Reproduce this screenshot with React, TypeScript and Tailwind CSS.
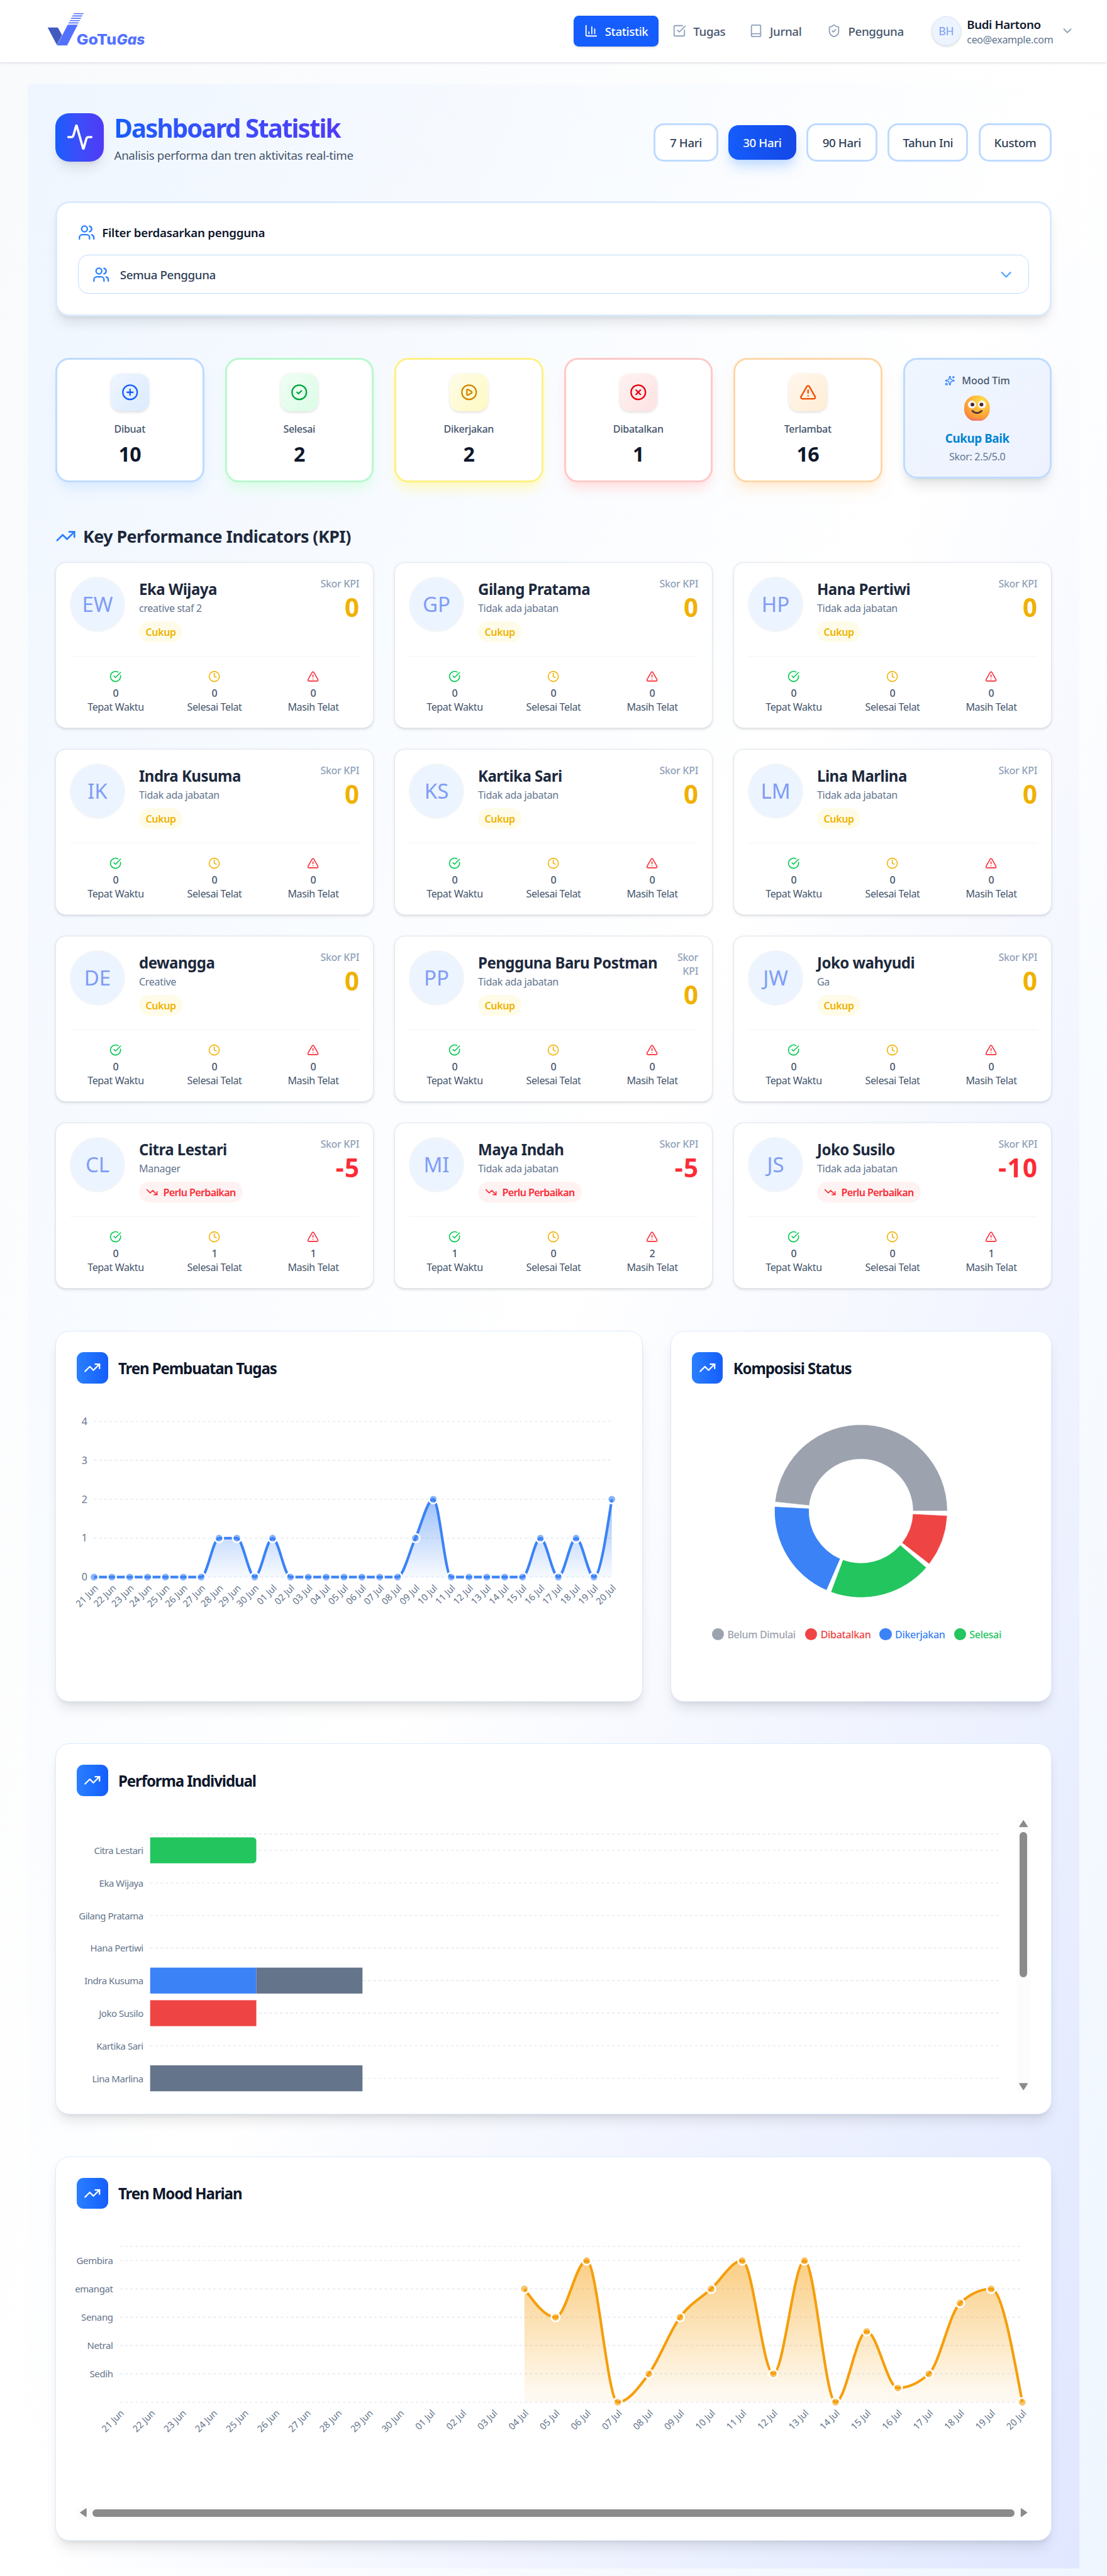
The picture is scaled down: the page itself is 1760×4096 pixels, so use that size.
import React from "react";
import {
  Activity, Book, ChartColumn, ChevronDown, CircleCheck, CircleCheckBig, CirclePlay, CirclePlus, CircleX, Clock,
  ShieldCheck, Sparkles, SquareCheckBig, TrendingDown, TrendingUp, TriangleAlert, Users,
} from "lucide-react";

const T12 = "text-[11.7px] leading-4 tracking-[-0.021em]";
const T14 = "text-[13.65px] leading-5 tracking-[-0.021em]";

/* ---------- header ---------- */

function Logo() {
  const stripes = [0, 1, 2, 3, 4];
  return (
    <svg viewBox="0 0 184 80" className="h-[53.33px] w-[122.67px]">
      <polygon points="6.3,37.8 24,37.8 31.2,51 22.3,68.3" fill="#4259bd" />
      <polygon points="41.2,33 58.5,33 40,69 22.3,69" fill="#5271ff" />
      {stripes.map((i) => {
        const y = 29 - i * 4;
        const x = 42.2 + i * 2.15;
        return <polygon key={i} points={`${x + 0.9},${y} ${x + 18},${y} ${x + 17.1},${y + 1.8} ${x},${y + 1.8}`} fill="#5271ff" />;
      })}
      <g fontFamily="Inter, sans-serif" fontWeight="800" fontSize="24.5" fill="#5271ff">
        <text x="56.5" y="67.3" textLength="69" lengthAdjust="spacingAndGlyphs">GoTu</text>
        <text x="126" y="67.3" textLength="49" lengthAdjust="spacingAndGlyphs" fontStyle="italic">Gas</text>
      </g>
    </svg>
  );
}

const NAV = [
  { label: "Statistik", icon: ChartColumn, cls: "w-[98.3px] bg-[#155dfc] text-white shadow-sm", ic: "text-white" },
  { label: "Tugas", icon: SquareCheckBig, cls: "w-[84.5px] text-[#45556c]", ic: "text-[#90a1b9]" },
  { label: "Jurnal", icon: Book, cls: "w-[86.5px] text-[#45556c]", ic: "text-[#90a1b9]" },
  { label: "Pengguna", icon: ShieldCheck, cls: "w-[110.8px] text-[#45556c]", ic: "text-[#90a1b9]" },
];

function Header() {
  return (
    <header className="flex h-[72.67px] items-center border-b border-[#e2e8f0] bg-white pr-[38px] pl-[50.67px] shadow-sm">
      <div className="-mt-[6px]"><Logo /></div>
      <nav className="ml-auto flex gap-1">
        {NAV.map(({ label, icon: Icon, cls, ic }) => (
          <a key={label} className={`flex h-9 items-center gap-2 rounded-md px-3 font-medium whitespace-nowrap ${T14} ${cls}`}>
            <Icon size={16} className={`shrink-0 ${ic}`} />
            <span>{label}</span>
          </a>
        ))}
      </nav>
      <div className="ml-[21.5px] flex items-center">
        <div className="flex h-[34px] w-[34px] items-center justify-center rounded-full border border-[#dbe5f3] bg-[#ebf4ff] text-[12.8px] tracking-[-0.02em] text-[#7f9cf5] shadow-sm">BH</div>
        <div className="ml-[7px] w-[108px] whitespace-nowrap">
          <div className={`font-semibold text-[#0f172b] ${T14}`}>Budi Hartono</div>
          <div className={`text-[#62748e] ${T12}`}>ceo@example.com</div>
        </div>
        <ChevronDown size={16} className="text-[#90a1b9]" />
      </div>
    </header>
  );
}

/* ---------- title and filter ---------- */

const RANGES = [
  { label: "7 Hari", w: "w-[74.3px]" },
  { label: "30 Hari", w: "w-[78.2px]", active: true },
  { label: "90 Hari", w: "w-[81.9px]" },
  { label: "Tahun Ini", w: "w-[93.3px]" },
  { label: "Kustom", w: "w-[84.4px]" },
];

function TitleRow() {
  return (
    <div className="flex h-[60px] items-center">
      <div className="rounded-2xl bg-linear-to-r from-[#155dfc] to-[#4f39f6] p-3 text-white shadow-lg">
        <Activity size={32} />
      </div>
      <div className="ml-3">
        <h1 className="translate-y-[1.5px] bg-linear-to-r from-[#155dfc] to-[#4f39f6] bg-clip-text text-[29.3px] leading-9 font-bold tracking-[-0.048em] text-transparent">Dashboard Statistik</h1>
        <p className="mt-1 translate-y-[0.5px] text-[13.65px] leading-5 tracking-[-0.0185em] text-[#45556c]">Analisis performa dan tren aktivitas real-time</p>
      </div>
      <div className="mt-[12px] ml-auto flex items-center gap-3">
        {RANGES.map((r) => (
          <button
            key={r.label}
            className={`${r.w} flex items-center justify-center rounded-xl font-medium whitespace-nowrap ${T14} ${
              r.active
                ? "h-10 bg-linear-to-r from-[#155dfc] to-[#1447e6] text-white shadow-lg shadow-blue-200"
                : "h-11 border-[2.2px] border-[#bedbff] bg-white text-[#314158]"
            }`}
          >
            {r.label}
          </button>
        ))}
      </div>
    </div>
  );
}

function Filter() {
  return (
    <div className="mt-11 h-[133.33px] rounded-2xl border-[2.2px] border-[#dbeafe] bg-white px-[23.8px] pt-[23.8px] shadow-lg">
      <div className="flex items-center gap-2">
        <Users size={20} className="text-[#2b7fff]" />
        <span className="text-[13.65px] leading-5 font-semibold tracking-[-0.013em] text-[#0f172b]">Filter berdasarkan pengguna</span>
      </div>
      <div className="mt-4 flex h-[45.33px] items-center gap-3 rounded-xl border border-[#bedbff] px-4">
        <Users size={20} className="text-[#2b7fff]" />
        <span className={`font-medium text-[#314158] ${T14}`}>Semua Pengguna</span>
        <ChevronDown size={20} className="ml-auto text-[#51a2ff]" />
      </div>
    </div>
  );
}

/* ---------- summary cards ---------- */

const STATS = [
  { label: "Dibuat", value: 10, icon: CirclePlus, card: "border-blue-200 shadow-blue-100", tile: "from-blue-50 to-blue-100 text-blue-600" },
  { label: "Selesai", value: 2, icon: CircleCheck, card: "border-green-200 shadow-green-100", tile: "from-green-50 to-green-100 text-green-600" },
  { label: "Dikerjakan", value: 2, icon: CirclePlay, card: "border-yellow-200 shadow-yellow-100", tile: "from-yellow-50 to-yellow-100 text-yellow-600" },
  { label: "Dibatalkan", value: 1, icon: CircleX, card: "border-red-200 shadow-red-100", tile: "from-red-50 to-red-100 text-red-600" },
  { label: "Terlambat", value: 16, icon: TriangleAlert, card: "border-orange-200 shadow-orange-100", tile: "from-orange-50 to-orange-100 text-orange-600" },
];

function Smiley() {
  return (
    <svg viewBox="0 0 32 32" className="h-[29.5px] w-[29.5px]">
      <defs>
        <radialGradient id="face" cx="0.68" cy="0.22" r="0.95">
          <stop offset="0" stopColor="#ffe04f" />
          <stop offset="0.45" stopColor="#fdb43a" />
          <stop offset="0.78" stopColor="#fb9236" />
          <stop offset="1" stopColor="#e95f62" />
        </radialGradient>
        <linearGradient id="chin" x1="0" y1="0" x2="0" y2="1">
          <stop offset="0.88" stopColor="#f0609a" stopOpacity="0" />
          <stop offset="1" stopColor="#f0609a" stopOpacity="0.75" />
        </linearGradient>
      </defs>
      <rect width="32" height="32" rx="14.5" fill="url(#face)" />
      <rect width="32" height="32" rx="14.5" fill="url(#chin)" />
      <circle cx="9.7" cy="11.3" r="4.9" fill="#fff" />
      <circle cx="22.2" cy="11.3" r="4.9" fill="#fff" />
      <circle cx="10.3" cy="11.3" r="2.4" fill="#4a2b36" />
      <circle cx="21.6" cy="11.3" r="2.4" fill="#4a2b36" />
      <path d="M10.1 19.2Q16 24.6 21.9 19.2" fill="none" stroke="#543339" strokeWidth="2.1" strokeLinecap="round" />
    </svg>
  );
}

function StatCards() {
  return (
    <div className="mt-12 grid grid-cols-6 items-start gap-6">
      {STATS.map(({ label, value, icon: Icon, card, tile }) => (
        <div key={label} className={`flex h-36 flex-col items-center rounded-2xl border-[2.2px] bg-white pt-[15.8px] shadow-lg ${card}`}>
          <div className={`rounded-xl bg-linear-to-br p-3 shadow-sm ${tile}`}><Icon size={20} /></div>
          <div className={`mt-3 font-medium text-[#45556c] ${T12}`}>{label}</div>
          <div className="mt-1 translate-y-[1.2px] text-[23.4px] leading-8 font-bold tracking-[-0.02em] text-[#0f172b]">{value}</div>
        </div>
      ))}
      <div className="flex h-[139.8px] flex-col items-center rounded-2xl border-[2.2px] border-blue-200 bg-linear-to-br from-blue-50 to-indigo-50 pt-[15.8px] shadow-lg">
        <div className="flex items-center gap-2">
          <Sparkles size={12} className="text-[#2b7fff]" />
          <span className="text-[11.7px] leading-4 font-medium tracking-[-0.007em] text-[#45556c]">Mood Tim</span>
        </div>
        <div className="mt-2 flex h-8 items-center"><Smiley /></div>
        <div className="mt-2 translate-y-[0.5px] text-[13.65px] leading-5 font-bold tracking-[-0.02em] text-[#0084d1]">Cukup Baik</div>
        <div className={`mt-1 text-[#62748e] ${T12}`}>Skor: 2.5/5.0</div>
      </div>
    </div>
  );
}

/* ---------- KPI cards ---------- */

type Person = { ini: string; name: string; role: string; score: number; n: [number, number, number]; wrap?: boolean };
const NONE = "Tidak ada jabatan";
const PEOPLE: Person[] = [
  { ini: "EW", name: "Eka Wijaya", role: "creative staf 2", score: 0, n: [0, 0, 0] },
  { ini: "GP", name: "Gilang Pratama", role: NONE, score: 0, n: [0, 0, 0] },
  { ini: "HP", name: "Hana Pertiwi", role: NONE, score: 0, n: [0, 0, 0] },
  { ini: "IK", name: "Indra Kusuma", role: NONE, score: 0, n: [0, 0, 0] },
  { ini: "KS", name: "Kartika Sari", role: NONE, score: 0, n: [0, 0, 0] },
  { ini: "LM", name: "Lina Marlina", role: NONE, score: 0, n: [0, 0, 0] },
  { ini: "DE", name: "dewangga", role: "Creative", score: 0, n: [0, 0, 0] },
  { ini: "PP", name: "Pengguna Baru Postman", role: NONE, score: 0, n: [0, 0, 0], wrap: true },
  { ini: "JW", name: "Joko wahyudi", role: "Ga", score: 0, n: [0, 0, 0] },
  { ini: "CL", name: "Citra Lestari", role: "Manager", score: -5, n: [0, 1, 1] },
  { ini: "MI", name: "Maya Indah", role: NONE, score: -5, n: [1, 0, 2] },
  { ini: "JS", name: "Joko Susilo", role: NONE, score: -10, n: [0, 0, 1] },
];

const COUNTS = [
  { label: "Tepat Waktu", icon: CircleCheckBig, color: "text-[#00c950]" },
  { label: "Selesai Telat", icon: Clock, color: "text-[#f0b100]" },
  { label: "Masih Telat", icon: TriangleAlert, color: "text-[#fb2c36]" },
];

function PersonCard({ p }: { p: Person }) {
  const bad = p.score < 0;
  return (
    <div className="h-48 rounded-xl border border-[#e2e8f0] bg-white px-4 pt-4 shadow-sm">
      <div className="flex h-[76px] items-start">
        <div className="flex h-16 w-16 shrink-0 items-center justify-center rounded-full border-[2.2px] border-[#f1f5f9] bg-[#ebf4ff] text-[24px] leading-8 text-[#7f9cf5]">{p.ini}</div>
        <div className="ml-4 flex-1 whitespace-nowrap">
          <div className="translate-y-[0.5px] text-[17.5px] leading-7 font-bold tracking-[-0.022em] text-[#1d293d]">{p.name}</div>
          <div className={`translate-y-[0.4px] text-[#62748e] ${T12}`}>{p.role}</div>
          {bad ? (
            <span className="mt-2 flex w-fit items-center gap-1.5 rounded-full bg-[#fef2f2] px-2 py-1 text-[11.7px] leading-4 font-semibold tracking-[-0.04em] text-[#fb2c36]">
              <TrendingDown size={14} />
              Perlu Perbaikan
            </span>
          ) : (
            <span className="mt-2 flex w-fit rounded-full bg-[#fefce8] px-[7.6px] py-1 text-[11.7px] leading-4 font-semibold tracking-[-0.025em] text-[#f0b100]">Cukup</span>
          )}
        </div>
        <div className="shrink-0 text-right whitespace-nowrap">
          <div className={`font-medium text-[#90a1b9] ${T12}`}>{p.wrap ? <>Skor<br />KPI</> : "Skor KPI"}</div>
          <div className={`text-[29.3px] leading-9 font-bold ${bad ? "-mr-[1px] translate-y-[1.3px] tracking-[0.035em] text-[#fb2c36]" : "translate-y-[1.3px] text-[#f0b100]"}`}>{p.score}</div>
        </div>
      </div>
      <div className="mt-4 grid grid-cols-3 gap-2 border-t border-[#f1f5f9] pt-4 text-center">
        {COUNTS.map(({ label, icon: Icon, color }, i) => (
          <div key={label} className="flex flex-col items-center">
            <Icon size={14} className={color} />
            <div className={`mt-1 font-medium text-[#45556c] ${T12}`}>{p.n[i]}</div>
            <div className="text-[11.7px] leading-4 tracking-[-0.024em] text-[#45556c]">{label}</div>
          </div>
        ))}
      </div>
    </div>
  );
}

/* ---------- charts ---------- */

type Pt = [number, number];

/** Monotone cubic path through the points, as in d3's curveMonotoneX. */
function monotone(p: Pt[]): string {
  const n = p.length;
  const sec = p.slice(1).map((q, i) => (q[1] - p[i][1]) / (q[0] - p[i][0]));
  const t: number[] = new Array(n).fill(0);
  for (let i = 1; i < n - 1; i++) {
    const a = sec[i - 1];
    const b = sec[i];
    const h0 = p[i][0] - p[i - 1][0];
    const h1 = p[i + 1][0] - p[i][0];
    const m = (a * h1 + b * h0) / (h0 + h1);
    t[i] = (Math.sign(a) + Math.sign(b)) * Math.min(Math.abs(a), Math.abs(b), 0.5 * Math.abs(m)) || 0;
  }
  t[0] = (3 * sec[0] - t[1]) / 2;
  t[n - 1] = (3 * sec[n - 2] - t[n - 2]) / 2;
  let d = `M${p[0][0]},${p[0][1]}`;
  for (let i = 1; i < n; i++) {
    const dx = (p[i][0] - p[i - 1][0]) / 3;
    d += `C${p[i - 1][0] + dx},${p[i - 1][1] + dx * t[i - 1]},${p[i][0] - dx},${p[i][1] - dx * t[i]},${p[i][0]},${p[i][1]}`;
  }
  return d;
}

const DAYS = Array.from({ length: 30 }, (_, i) => (i < 10 ? `${21 + i} Jun` : `${String(i - 9).padStart(2, "0")} Jul`));

function ChartCard({ title, className, children }: { title: string; className: string; children: React.ReactNode }) {
  return (
    <section className={`rounded-2xl border border-[#dbeafe] bg-white px-6 pt-6 shadow-lg ${className}`}>
      <div className="mb-6 flex items-center gap-3">
        <div className="rounded-lg bg-linear-to-r from-[#2b7fff] to-[#155dfc] p-2 text-white"><TrendingUp size={20} /></div>
        <h3 className="translate-y-[0.8px] text-[17.5px] leading-7 font-bold tracking-[-0.046em] text-[#0f172b]">{title}</h3>
      </div>
      {children}
    </section>
  );
}

function GridLine({ x1, x2, y }: { x1: number; x2: number; y: number }) {
  return <line x1={x1} x2={x2} y1={y} y2={y} stroke="#e2e8f0" strokeDasharray="3 3" />;
}

function AreaChart(props: {
  w: number; x0: number; step: number; y0: number; color: string; id: string;
  points: (Pt)[]; grid: number[]; gridEnd: number; labels: [string, number][]; tickSize: number;
}) {
  const { w, x0, step, y0, color, id, points, grid, gridEnd, labels, tickSize } = props;
  const line = monotone(points);
  const area = `${line}L${points[points.length - 1][0]},${y0}L${points[0][0]},${y0}Z`;
  return (
    <svg width={w} height="320" viewBox={`0 0 ${w} 320`} className="block overflow-visible" fontFamily="'Noto Sans', sans-serif" fontSize="10.75" fill="#64748b">
      <defs>
        <linearGradient id={id} x1="0" y1="0" x2="0" y2="1">
          <stop offset="5%" stopColor={color} stopOpacity="0.8" />
          <stop offset="95%" stopColor={color} stopOpacity="0.1" />
        </linearGradient>
      </defs>
      {grid.map((y) => <GridLine key={y} x1={x0} x2={gridEnd} y={y} />)}
      {labels.map(([t, y]) => <text key={t} x={x0 - 8} y={y + 4.2} textAnchor="end" fontSize={tickSize} letterSpacing="-0.27">{t}</text>)}
      {DAYS.map((d, i) => {
        const x = x0 + i * step;
        return <text key={d} x={x} y={y0 + 8} dy="0.71em" textAnchor="end" letterSpacing="-0.05" transform={`rotate(-45 ${x} ${y0 + 8})`}>{d}</text>;
      })}
      <path d={area} fill={`url(#${id})`} fillOpacity="0.6" />
      <path d={line} fill="none" stroke={color} strokeWidth="3" />
      {points.map(([x, y]) => <circle key={x} cx={x} cy={y} r="4.9" fill={color} fillOpacity="0.6" stroke="#fff" strokeWidth="2" />)}
    </svg>
  );
}

function TaskTrend() {
  const v = [0, 0, 0, 0, 0, 0, 0, 1, 1, 0, 1, 0, 0, 0, 0, 0, 0, 0, 1, 2, 0, 0, 0, 0, 0, 1, 0, 1, 0, 2];
  const x0 = 20;
  const step = 598.7 / 29;
  const y0 = 199.7;
  const y = (n: number) => y0 - n * 45;
  return (
    <AreaChart
      w={629} x0={x0} step={step} y0={y0} color="#3b82f6" id="taskFill" gridEnd={618.7} tickSize={11.6}
      points={v.map((n, i) => [x0 + i * step, y(n)] as Pt)}
      grid={[0, 1, 2, 3, 4].map(y)}
      labels={[0, 1, 2, 3, 4].map((n) => [String(n), y(n)])}
    />
  );
}

function MoodTrend() {
  const v = [4, 3, 5, 0, 1, 3, 4, 5, 1, 5, 0, 2.5, 0.5, 1, 3.5, 4, 0];
  const x0 = 49.9;
  const step = 35.98;
  const y0 = 199.7;
  const y = (n: number) => y0 - n * 32.75;
  return (
    <AreaChart
      w={1102.5} x0={x0} step={step} y0={y0} color="#f59e0b" id="moodFill" gridEnd={1093.3} tickSize={10.9}
      points={v.map((n, i) => [x0 + (i + 13) * step, y(n)] as Pt)}
      grid={[0, 1, 2, 3, 4, 5, 5.5].map(y)}
      labels={[["Sedih", y(1)], ["Netral", y(2)], ["Senang", y(3)], ["emangat", y(4)], ["Gembira", y(5)]]}
    />
  );
}

function arc(cx: number, cy: number, r0: number, r1: number, a0: number, a1: number) {
  const pt = (r: number, a: number) => `${cx + r * Math.cos((a * Math.PI) / 180)},${cy - r * Math.sin((a * Math.PI) / 180)}`;
  const big = a1 - a0 > 180 ? 1 : 0;
  return `M${pt(r1, a0)}A${r1},${r1},0,${big},0,${pt(r1, a1)}L${pt(r0, a1)}A${r0},${r0},0,${big},1,${pt(r0, a0)}Z`;
}

function StatusDonut() {
  const slices: [string, number, number][] = [
    ["#9ca3af", 0, 174],
    ["#3b82f6", 177, 246.6],
    ["#22c55e", 249.6, 319.2],
    ["#ef4444", 322.2, 357],
  ];
  return (
    <div>
      <svg width="391" height="256" viewBox="0 0 391 256" className="block">
        {slices.map(([c, a0, a1]) => <path key={c} d={arc(195.5, 123.4, 60, 100, a0, a1)} fill={c} stroke="#fff" strokeWidth="0.6" />)}
      </svg>
      <div className="flex h-5 items-center pl-[23.3px] text-[11.7px] font-medium tracking-[-0.021em] whitespace-nowrap">
        <span className="flex w-[107.8px] items-center gap-1 text-[#9ca3af]"><i className="h-3.5 w-3.5 rounded-full bg-[#9ca3af]" />Belum Dimulai</span>
        <span className="flex w-[86.1px] items-center gap-1 text-[#ef4444]"><i className="h-3.5 w-3.5 rounded-full bg-[#ef4444]" />Dibatalkan</span>
        <span className="flex w-[86px] items-center gap-1 text-[#3b82f6]"><i className="h-3.5 w-3.5 rounded-full bg-[#3b82f6]" />Dikerjakan</span>
        <span className="flex items-center gap-1 text-[#22c55e]"><i className="h-3.5 w-3.5 rounded-full bg-[#22c55e]" />Selesai</span>
      </div>
    </div>
  );
}

function Performance() {
  const rows: { name: string; bars: [string, number][]; round?: boolean }[] = [
    { name: "Citra Lestari", bars: [["#22c55e", 1]], round: true },
    { name: "Eka Wijaya", bars: [] },
    { name: "Gilang Pratama", bars: [] },
    { name: "Hana Pertiwi", bars: [] },
    { name: "Indra Kusuma", bars: [["#3b82f6", 1], ["#64748b", 1]] },
    { name: "Joko Susilo", bars: [["#ef4444", 1]] },
    { name: "Kartika Sari", bars: [] },
    { name: "Lina Marlina", bars: [["#64748b", 2]] },
  ];
  const x0 = 84.9;
  const unit = 122.75;
  return (
    <div className="flex h-80">
      <svg width="1087.3" height="320" viewBox="0 0 1087.3 320" className="block overflow-hidden" fontFamily="'Noto Sans', sans-serif" fontSize="10.9" fill="#64748b" letterSpacing="-0.33">
        <GridLine x1={x0} x2={1066} y={19.8} />
        {rows.map((r, i) => {
          const y = 38.6 + i * 37.67;
          let x = x0;
          return (
            <g key={r.name}>
              <GridLine x1={x0} x2={1066} y={y} />
              <text x={x0 - 8} y={y + 4.3} textAnchor="end">{r.name}</text>
              {r.bars.map(([c, n]) => {
                const w = n * unit;
                const left = x;
                x += w;
                return r.round ? (
                  <path key={c} d={`M${left},${y - 15}h${w - 4}a4,4 0 0 1 4,4v22a4,4 0 0 1 -4,4h${4 - w}z`} fill={c} />
                ) : (
                  <rect key={c} x={left} y={y - 15} width={w} height="30" fill={c} />
                );
              })}
            </g>
          );
        })}
      </svg>
      <div className="flex w-[15px] flex-col items-center bg-[#fcfcfc] pt-[4px] pb-[3.5px]">
        <svg width="10.4" height="8.4" viewBox="0 0 10.4 8.4"><path d="M5.2 0.8L9.6 7.6H0.8Z" fill="#8b8b8b" stroke="#8b8b8b" strokeWidth="1.2" strokeLinejoin="round" /></svg>
        <div className="mt-[5.5px] h-[168px] w-[8.7px] rounded-full bg-[#8b8b8b]" />
        <svg width="10.4" height="8.4" viewBox="0 0 10.4 8.4" className="mt-auto"><path d="M5.2 7.6L9.6 0.8H0.8Z" fill="#8b8b8b" stroke="#8b8b8b" strokeWidth="1.2" strokeLinejoin="round" /></svg>
      </div>
    </div>
  );
}

/* ---------- page ---------- */

export default function App() {
  return (
    <div className="h-[2978.9px] w-[1280px] overflow-hidden bg-linear-to-br from-slate-50 via-white to-blue-50 font-['Noto_Sans',sans-serif] [zoom:1.375]">
      <Header />
      <main className="mx-8 mt-6 h-[2873.33px] bg-linear-to-br from-blue-50 via-white to-indigo-100 p-8">
        <TitleRow />
        <Filter />
        <StatCards />
        <div className="mt-12 flex items-center gap-2">
          <TrendingUp size={24} className="text-[#2b7fff]" />
          <h2 className="translate-y-[0.8px] text-[19.5px] leading-7 font-bold tracking-[-0.019em] text-[#1d293d]">Key Performance Indicators (KPI)</h2>
        </div>
        <div className="mt-4 grid grid-cols-3 gap-6">
          {PEOPLE.map((p) => <PersonCard key={p.ini} p={p} />)}
        </div>
        <div className="mt-12 flex gap-8 pt-[1.2px]">
          <ChartCard title="Tren Pembuatan Tugas" className="h-[429px] w-[679px]"><TaskTrend /></ChartCard>
          <ChartCard title="Komposisi Status" className="h-[429px] flex-1"><StatusDonut /></ChartCard>
        </div>
        <ChartCard title="Performa Individual" className="mt-12 h-[429px]"><Performance /></ChartCard>
        <ChartCard title="Tren Mood Harian" className="mt-[48.5px] h-[444.3px]">
          <MoodTrend />
          <div className="flex h-[15px] items-center justify-between bg-[#fcfcfc] px-[3.6px]">
            <svg width="8.4" height="10.4" viewBox="0 0 8.4 10.4"><path d="M0.8 5.2L7.2 0.8V9.6Z" fill="#8b8b8b" stroke="#8b8b8b" strokeWidth="1.2" strokeLinejoin="round" /></svg>
            <div className="h-[8.7px] w-[1066px] rounded-full bg-[#8b8b8b]" />
            <svg width="8.4" height="10.4" viewBox="0 0 8.4 10.4"><path d="M7.6 5.2L1.2 0.8V9.6Z" fill="#8b8b8b" stroke="#8b8b8b" strokeWidth="1.2" strokeLinejoin="round" /></svg>
          </div>
        </ChartCard>
      </main>
    </div>
  );
}
